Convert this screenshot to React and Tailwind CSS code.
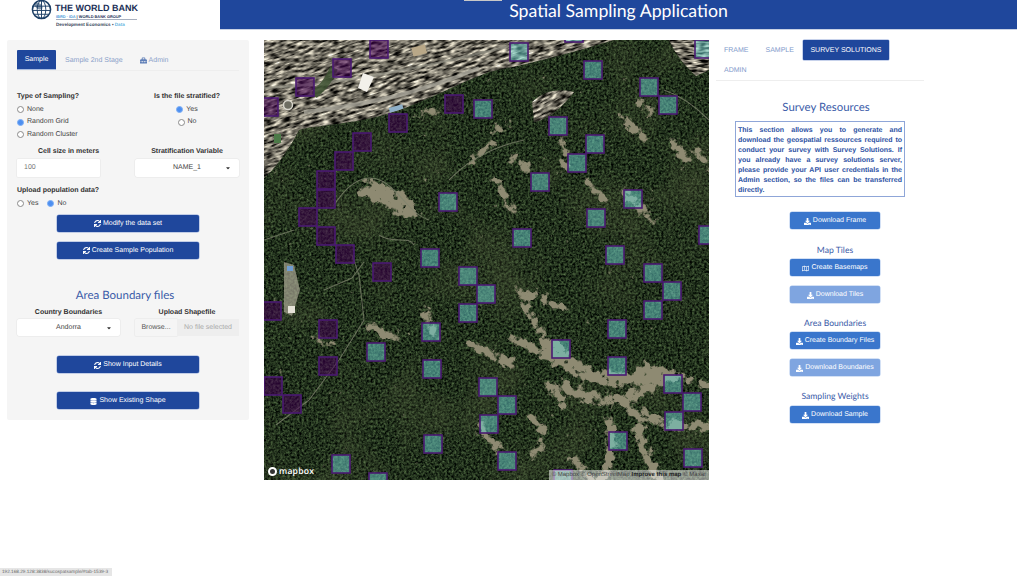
import React from "react";
import { FaSync, FaDatabase, FaDownload, FaRegMap, FaToolbox, FaCaretDown } from "react-icons/fa";

const PURPLE = [[379,49],[342,68],[305,87],[269,107],[454,104],[398,123],[362,142],[344,161],[326,180],[326,199],[308,217],[326,236],[345,254],[382,272],[272,311],[328,329],[328,366],[273,386],[292,404],[254,442]];
const TEAL = [[574,33],[519,52],[593,70],[649,87],[668,105],[483,109],[558,126],[595,144],[577,163],[540,182],[633,199],[448,202],[596,218],[522,238],[615,255],[430,258],[704,49],[708,235],[653,273],[468,276],[672,291],[486,294],[653,310],[468,313],[617,329],[431,332],[561,349],[376,352],[617,366],[432,369],[673,384],[488,387],[692,402],[507,405],[674,421],[489,424],[433,444],[618,441],[341,464],[507,461],[693,458],[378,482],[563,479]];

// soft regions of bare ground, thresholded against noise by the filter
const TAN = [
  ["M290 305 C310 335 340 350 395 330", 15],
  ["M300 345 C330 370 370 362 405 335", 11],
  ["M250 298 L300 325", 9],
  ["M208 305 C225 315 240 320 250 325", 10],
  ["M160 270 L172 295", 8],
  ["M105 285 C120 295 130 300 140 295", 8],
  ["M258 260 C270 280 280 300 285 310", 8],
  ["M360 365 C395 385 420 390 445 385", 10],
  ["M345 380 C350 400 345 420 340 440", 10],
  ["M375 385 C375 405 385 420 395 440", 10],
  ["M265 375 C280 385 285 400 270 415", 8],
  ["M285 345 L300 365", 10],
  ["M255 250 L300 268", 8],
  ["M232 140 L250 172", 8],
  ["M360 78 L380 100", 10],
  ["M408 100 L425 125", 9],
  ["M250 118 L265 130", 9],
  ["M373 62 L388 75", 7],
  ["M320 140 L340 160", 7],
  ["M360 150 L390 180", 8],
  ["M300 100 L300 130", 7],
  ["M432 110 L445 125", 8],
  ["M380 325 L445 345", 7],
  ["M150 75 L175 70", 7],
  ["M105 150 C120 155 135 160 145 170", 20],
  ["M205 120 L232 100", 6],
  ["M225 90 L242 88", 8],
  ["M215 385 L235 410", 9],
  ["M310 420 L330 440", 9],
  ["M50 300 L70 305", 6],
];

const ROADS = [
  "M88 215 L95 235 L100 280 L75 320 L45 360 L12 385",
  "M60 250 L88 238 L100 222",
  "M185 140 C195 130 215 110 260 100",
  "M70 165 C90 135 110 130 130 150 C145 165 150 175 165 180",
  "M115 195 C130 205 145 195 150 205",
  "M0 200 L30 190",
  "M400 50 C415 55 430 65 445 80",
];

function Terrain() {
  return (
    <svg viewBox="0 0 445 440" className="block w-[445px] h-[440px]">
      <defs>
        <filter id="forest" x="0" y="0" width="100%" height="100%" colorInterpolationFilters="sRGB">
          <feTurbulence type="fractalNoise" baseFrequency="0.42" numOctaves="3" seed="4" />
          <feColorMatrix type="matrix" values="0.5 0 0 0 -0.12  0.62 0 0 0 -0.12  0.4 0 0 0 -0.09  0 0 0 0 1" />
          <feGaussianBlur stdDeviation="0.45" />
        </filter>
        <filter id="blotch" x="0" y="0" width="100%" height="100%" colorInterpolationFilters="sRGB">
          <feTurbulence type="fractalNoise" baseFrequency="0.015" numOctaves="3" seed="9" />
          <feColorMatrix type="matrix" values="0 0 0 0 0.33  0 0 0 0 0.36  0 0 0 0 0.24  2 0 0 0 -0.95" />
        </filter>
        <filter id="patch" x="-10%" y="-10%" width="120%" height="120%" colorInterpolationFilters="sRGB">
          <feGaussianBlur in="SourceAlpha" stdDeviation="3" result="b" />
          <feTurbulence type="fractalNoise" baseFrequency="0.14" numOctaves="4" seed="21" />
          <feColorMatrix type="matrix" values="0 0 0 0 0  0 0 0 0 0  0 0 0 0 0  1 0 0 0 0" result="na" />
          <feComposite in="b" in2="na" operator="arithmetic" k1="0" k2="3.6" k3="6" k4="-4.7" result="m" />
          <feFlood floodColor="#8e8a72" />
          <feComposite in2="m" operator="in" />
          <feGaussianBlur stdDeviation="0.4" />
        </filter>
        <filter id="city" x="0" y="0" width="100%" height="100%" colorInterpolationFilters="sRGB">
          <feTurbulence type="fractalNoise" baseFrequency="0.11 0.4" numOctaves="2" seed="12" />
          <feColorMatrix type="matrix" values="1.9 0 0 0 -0.5  1.85 0 0 0 -0.49  1.7 0 0 0 -0.46  0 0 0 0 1" />
          <feGaussianBlur stdDeviation="0.4" />
        </filter>
        <clipPath id="urban">
          <path d="M0 0 L350 0 C300 15 260 25 225 32 C190 45 165 60 130 72 C90 85 50 85 35 90 C25 110 10 130 0 138 Z" />
        </clipPath>
        <clipPath id="urban2">
          <path d="M405 0 L445 0 L445 30 L432 36 C420 25 412 15 405 0 Z" />
        </clipPath>
        <clipPath id="village">
          <path d="M268 62 C280 50 295 48 310 52 C300 65 285 80 270 82 Z" />
        </clipPath>
      </defs>

      <rect width="445" height="440" filter="url(#forest)" />
      <rect width="445" height="440" filter="url(#blotch)" opacity="0.45" />

      <g filter="url(#patch)" fill="none" stroke="#000" strokeLinecap="round">
        {TAN.map(([d, w], i) => (
          <path key={i} d={d} strokeWidth={w} />
        ))}
      </g>

      <g fill="none" stroke="#7f846e" strokeWidth="1.1" opacity="0.75">
        {ROADS.map((d, i) => (
          <path key={i} d={d} />
        ))}
      </g>

      <g clipPath="url(#urban)">
        <g transform="rotate(-18 150 60)">
          <rect x="-80" y="-90" width="560" height="300" filter="url(#city)" />
        </g>
        <path d="M0 48 C60 45 130 35 250 5" stroke="#9a988c" strokeWidth="2.5" fill="none" opacity="0.7" />
        <path d="M40 72 C100 65 150 55 215 28" stroke="#a6a498" strokeWidth="4" fill="none" opacity="0.8" />
        <path d="M70 28 C65 40 60 46 50 55" stroke="#3e5232" strokeWidth="8" fill="none" opacity="0.85" />
        <polygon points="99,33 110,37 103,52 94,48" fill="#f2f0ea" />
        <rect x="148" y="6" width="14" height="9" fill="#b9a888" transform="rotate(-15 155 10)" />
        <rect x="125" y="66" width="14" height="5" fill="#8fb0c8" transform="rotate(-15 132 68)" />
        <circle cx="24" cy="65" r="4.5" fill="#6e6e62" stroke="#d8d6cc" strokeWidth="1.5" />
        <rect x="10" y="94" width="7" height="9" fill="#4c7a48" />
      </g>
      <g clipPath="url(#urban2)">
        <rect width="445" height="60" filter="url(#city)" />
      </g>
      <g clipPath="url(#village)">
        <g transform="rotate(-30 290 65)">
          <rect x="240" y="20" width="110" height="90" filter="url(#city)" />
        </g>
      </g>

      <g>
        <path d="M20 222 L30 225 L36 250 L28 276 L20 272 Z" fill="#a9a794" opacity="0.7" />
        <rect x="24" y="266" width="7" height="7" fill="#e6e3d8" />
        <rect x="23" y="226" width="6" height="5" fill="#6f9ccf" />
      </g>

      {PURPLE.map(([x, y], i) => (
        <rect key={i} x={x - 264 - 9} y={y - 40 - 9} width="18" height="18" fill="#440154" fillOpacity="0.55" stroke="#4a1a72" strokeWidth="1.6" />
      ))}
      {TEAL.map(([x, y], i) => (
        <rect key={i} x={x - 264 - 9} y={y - 40 - 9} width="18" height="18" fill="#6cd4d0" fillOpacity="0.5" stroke="#4a1a72" strokeWidth="1.6" />
      ))}
    </svg>
  );
}

function Logo() {
  return (
    <div className="relative w-[220px] h-[30px] bg-white overflow-hidden shrink-0 [font-family:'Liberation_Sans',Arial,sans-serif]">
      <svg viewBox="0 0 22 24" className="absolute left-[31px] top-[-2px] w-[21px] h-[23px]" fill="none" stroke="#1d3f66" strokeWidth="1">
        <circle cx="11" cy="12" r="9.5" strokeWidth="1.6" />
        <ellipse cx="11" cy="12" rx="4.5" ry="9.5" />
        <path d="M2 8.5 H20 M1.5 13 H20.5 M3 17 H19 M11 2.5 V21.5" />
        <path d="M3 6 C7 3 13 7 12 11 C9 13 5 12 3 6 Z" fill="#1d3f66" fillOpacity="0.55" stroke="none" />
      </svg>
      <div className="absolute left-[55px] top-[2.5px] text-[9px] leading-[11px] font-bold text-[#1c2f57] whitespace-nowrap">THE WORLD BANK</div>
      <div className="absolute left-[56px] top-[13.5px] text-[3.9px] leading-[5px] font-bold text-[#1c2f57] whitespace-nowrap">
        <span className="text-[#4a9bd9]">IBRD · IDA</span> | WORLD BANK GROUP
      </div>
      <div className="absolute left-[56px] top-[19px] w-[81px] h-px bg-[#a8b0bf]" />
      <div className="absolute left-[56px] top-[21.5px] text-[4.6px] leading-[5px] font-bold text-[#3b4a5e] whitespace-nowrap">
        Development Economics • <span className="text-[#67b5e0]">Data</span>
      </div>
    </div>
  );
}

function Radio({ on }) {
  return on ? (
    <span className="inline-block w-[7px] h-[7px] rounded-full bg-[#4d8ff0] border-[1.5px] border-[#7fb0f5] shrink-0" />
  ) : (
    <span className="inline-block w-[7px] h-[7px] rounded-full bg-white border border-[#8a8a8a] shrink-0" />
  );
}

function RadioRow({ on, label, className = "" }) {
  return (
    <div className={`flex items-center gap-[3px] h-[12.5px] text-[#444] ${className}`}>
      <Radio on={on} />
      <span>{label}</span>
    </div>
  );
}

function DarkButton({ icon: Icon, label, className = "" }) {
  return (
    <div className={`mx-auto w-[142px] h-[17px] pt-px flex items-center justify-center gap-[2px] rounded-[2px] bg-[#1f479c] shadow-[0_0_0_0.5px_#8fa6d8] text-white ${className}`}>
      <Icon className="w-[7px] h-[7px]" />
      <span>{label}</span>
    </div>
  );
}

function BlueButton({ icon: Icon = FaDownload, label, faded, className = "" }) {
  return (
    <div className={`w-[90px] h-[17px] pt-px flex items-center justify-center gap-[2px] rounded-[2px] shadow-[0_0_0_0.5px_#a9c4ec] text-white ${faded ? "bg-[#7fa5e0]" : "bg-[#3a76cc]"} ${className}`}>
      <Icon className="w-[7px] h-[7px]" />
      <span>{label}</span>
    </div>
  );
}

function SelectBox({ label, className = "" }) {
  return (
    <div className={`relative h-[17.5px] pt-px bg-white rounded-[2px] shadow-[0_0_0_0.5px_#e6e6e6] flex items-center justify-center text-[#444] ${className}`}>
      <span>{label}</span>
      <FaCaretDown className="absolute right-[8px] top-[6px] w-[6px] h-[6px] text-[#333]" />
    </div>
  );
}

const HEAD = "[font-family:'Lato',sans-serif] text-[#3a5ba8] text-center";

export default function App() {
  return (
    <div className="relative w-[1024px] h-[576px] overflow-hidden bg-white [font-family:'Liberation_Sans',Arial,sans-serif] text-[7px] leading-[10px] [text-rendering:geometricPrecision]">
      <header className="flex h-[30px]">
        <Logo />
        <div className="relative flex-1 mr-[7px] bg-[#1f479c] border-b border-[#c9d2e4] flex justify-center">
          <span className="[font-family:'Lato',sans-serif] text-[17.7px] leading-[21px] text-white">Spatial Sampling Application</span>
          <span className="absolute left-[244px] top-0 w-[38px] h-px bg-[#c8c8c8]" />
        </div>
      </header>

      <main className="flex pt-[10px] pl-[7px] items-start">
        <section className="w-[242px] pt-[10px] px-[10px] pb-[11px] bg-[#f5f5f5] rounded-[2px]">
          <div className="flex items-stretch h-[21px] border-b border-[#eeeeee]">
            <div className="w-[39px] h-[20px] pt-px flex items-center justify-center bg-[#1f479c] text-white rounded-[1px] border-b border-[#a9bce0]">Sample</div>
            <div className="h-[20px] pt-px flex items-center ml-[9px] text-[#8aa0c9]">Sample 2nd Stage</div>
            <div className="h-[20px] pt-px flex items-center gap-[2px] ml-[17px] text-[#8aa0c9]">
              <FaToolbox className="w-[7px] h-[7px] text-[#5f7fb8]" />
              <span>Admin</span>
            </div>
          </div>

          <div className="grid grid-cols-[103px_104px] gap-x-[15px] mt-[20.5px]">
            <div>
              <div className="font-bold text-[#333] mb-[2px]">Type of Sampling?</div>
              <RadioRow label="None" />
              <RadioRow on label="Random Grid" />
              <RadioRow label="Random Cluster" />
            </div>
            <div className="text-center">
              <div className="font-bold text-[#333] mb-[2px]">Is the file stratified?</div>
              <RadioRow on label="Yes" className="justify-center" />
              <RadioRow label="No" className="justify-center" />
            </div>
          </div>

          <div className="grid grid-cols-[103px_104px] gap-x-[15px] mt-[5.5px]">
            <div>
              <div className="font-bold text-[#333] text-center mb-[2px]">Cell size in meters</div>
              <div className="w-[83px] h-[18px] pl-[7px] flex items-center bg-white shadow-[0_0_0_0.5px_#e6e6e6] rounded-[1px] text-[#777]">100</div>
            </div>
            <div>
              <div className="font-bold text-[#333] text-center mb-[2px]">Stratification Variable</div>
              <SelectBox label="NAME_1" className="h-[18px]" />
            </div>
          </div>

          <div className="mt-[9px] font-bold text-[#333] mb-[2px]">Upload population data?</div>
          <div className="flex">
            <RadioRow label="Yes" />
            <RadioRow on label="No" className="ml-[9px]" />
          </div>

          <DarkButton icon={FaSync} label="Modify the data set" className="mt-[4.5px]" />
          <DarkButton icon={FaSync} label="Create Sample Population" className="mt-[10px]" />

          <h2 className={`${HEAD} text-[11.5px] leading-[16px] mt-[29px] pr-[6px]`}>Area Boundary files</h2>

          <div className="grid grid-cols-[103px_104px] gap-x-[15px] mt-[4px]">
            <div>
              <div className="font-bold text-[#333] text-center mb-px">Country Boundaries</div>
              <SelectBox label="Andorra" />
            </div>
            <div>
              <div className="font-bold text-[#333] text-center mb-px">Upload Shapefile</div>
              <div className="flex h-[17.5px]">
                <div className="w-[42px] pt-px flex items-center justify-center bg-[#f5f5f5] shadow-[0_0_0_0.5px_#e6e6e6] text-[#555] rounded-l-[1px]">Browse...</div>
                <div className="flex-1 pt-px flex items-center justify-center bg-[#eeeeee] text-[#aaa]">No file selected</div>
              </div>
            </div>
          </div>

          <DarkButton icon={FaSync} label="Show Input Details" className="mt-[20px]" />
          <DarkButton icon={FaDatabase} label="Show Existing Shape" className="mt-[19px]" />
        </section>

        <div className="relative ml-[15px] w-[445px] h-[440px] overflow-hidden shrink-0">
          <Terrain />
          <div className="absolute left-[4px] bottom-[3px] flex items-center gap-[2px] text-white">
            <span className="w-[9px] h-[9px] rounded-full border-[2.5px] border-white bg-[#333]" />
            <span className="[font-family:'Open_Sans',sans-serif] font-semibold text-[8.6px] leading-[11px] tracking-[0.2px]">mapbox</span>
          </div>
          <div className="absolute right-0 bottom-0 h-[10px] px-[3px] flex items-center gap-[2px] bg-white/50 text-[6px] leading-[10px] text-[#444] whitespace-nowrap">
            <span>© Mapbox</span>
            <span>© OpenStreetMap</span>
            <span className="font-bold text-[#222]">Improve this map</span>
            <span>© Maxar</span>
          </div>
        </div>

        <section className="ml-[7px] w-[238px] shrink-0">
          <nav className="flex flex-wrap w-[208px] h-[41px] border-b border-[#eeeeee] text-[#7f9acb]">
            <div className="h-[20px] pt-[2px] px-[8px] flex items-center mr-px">FRAME</div>
            <div className="h-[20px] pt-[2px] px-[8px] flex items-center mr-px">SAMPLE</div>
            <div className="h-[20px] pt-[2px] w-[86px] flex items-center justify-center bg-[#1f479c] text-white rounded-[1px] shadow-[0_0_0_0.5px_#8fa6d8]">SURVEY SOLUTIONS</div>
            <div className="h-[20px] pt-[2px] px-[8px] flex items-center">ADMIN</div>
          </nav>

          <h2 className={`${HEAD} w-[220px] text-[11.4px] leading-[16px] mt-[19px]`}>Survey Resources</h2>

          <div className="ml-[19px] mt-[5px] w-[170px] h-[76px] border border-[#8fa6d8] px-[2px] pt-[4px] font-bold text-[#2c51a3] text-justify">
            This section allows you to generate and download the geospatial ressources required to conduct your survey with Survey Solutions. If you already have a survey solutions server, please provide your API user credentials in the Admin section, so the files can be transferred directly.
          </div>

          <div className="flex flex-col items-center">
            <BlueButton label="Download Frame" className="mt-[15px]" />
            <h3 className={`${HEAD} text-[8.6px] leading-[12px] mt-[15px]`}>Map Tiles</h3>
            <BlueButton icon={FaRegMap} label="Create Basemaps" className="mt-[3px]" />
            <BlueButton label="Download Tiles" faded className="mt-[10px]" />
            <h3 className={`${HEAD} text-[8.6px] leading-[12px] mt-[14px]`}>Area Boundaries</h3>
            <BlueButton label="Create Boundary Files" className="mt-[3px]" />
            <BlueButton label="Download Boundaries" faded className="mt-[10px]" />
            <h3 className={`${HEAD} text-[8.6px] leading-[12px] mt-[14px]`}>Sampling Weights</h3>
            <BlueButton label="Download Sample" className="mt-[4px]" />
          </div>
        </section>
      </main>

      <div className="absolute left-0 bottom-0 w-[112px] h-[8px] bg-[#e6e6e6] pl-[2px] text-[4.7px] leading-[8px] text-[#666] whitespace-nowrap overflow-hidden">
        192.168.29.128:3838/sucospatsample/#tab-1539-3
      </div>
    </div>
  );
}
